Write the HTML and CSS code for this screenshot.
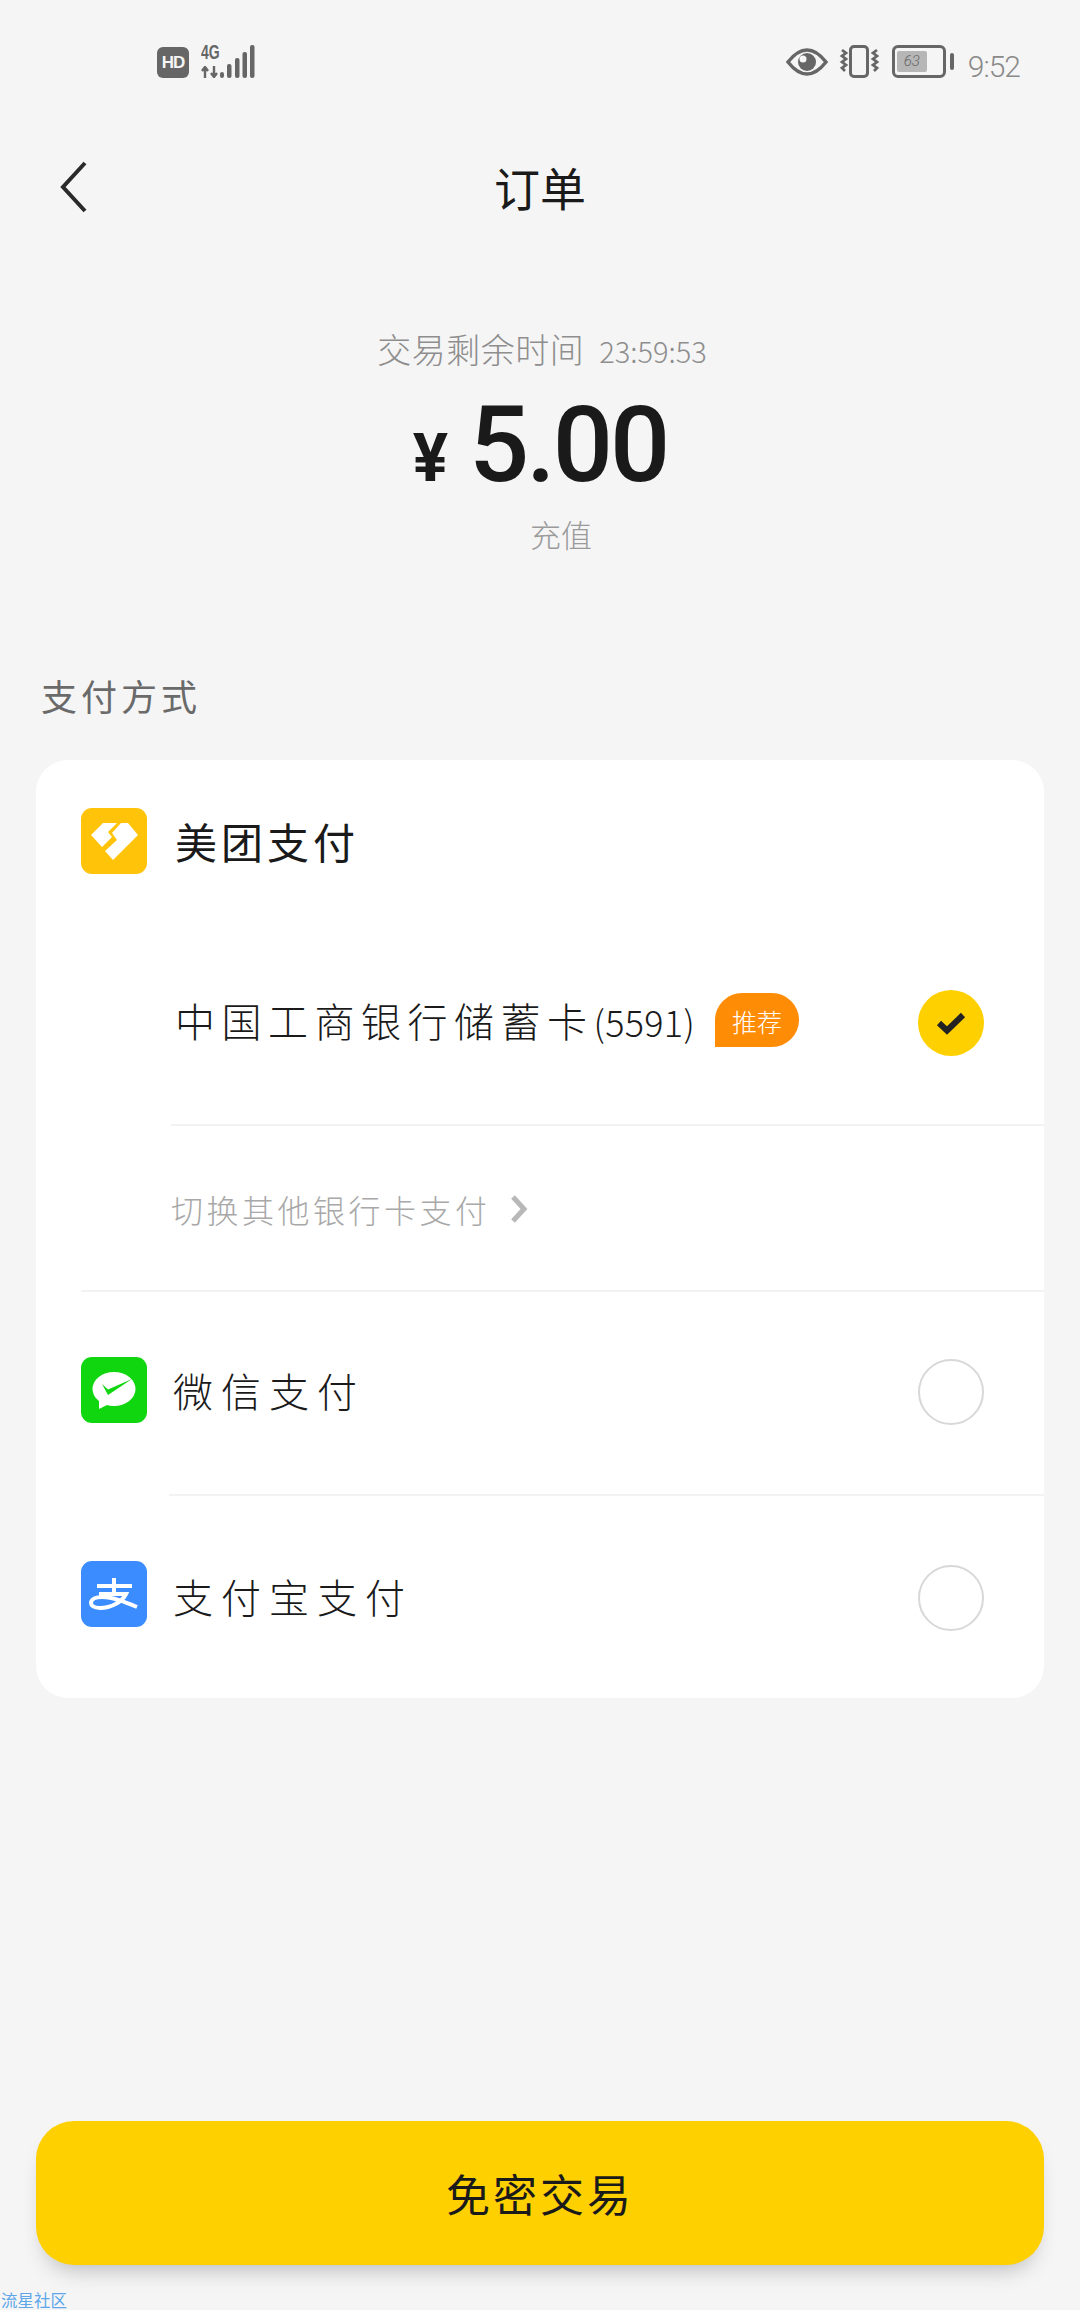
FILE: index.html
```html
<!DOCTYPE html>
<html lang="zh-CN">
<head>
    <meta charset="UTF-8">
    <meta name="viewport" content="width=device-width, initial-scale=1.0">
    <title>订单</title>
    <link rel="stylesheet" href="styles.css">
</head>
<body>
    <div class="page">
        <!-- Status bar -->
        <div class="status-bar">
            <div class="status-left">
                <span class="hd-badge">HD</span>
                <div class="net">
                    <span class="net-type">4G</span>
                    <svg width="18" height="12" viewBox="0 0 18 12">
                        <path d="M4 12V3M1 5l3-4 3 4" fill="none" stroke="#666" stroke-width="2.400"/>
                        <path d="M13 0v9M10 7l3 4 3-4" fill="none" stroke="#666" stroke-width="2.400"/>
                    </svg>
                </div>
                <svg class="bars" width="35" height="33" viewBox="0 0 35 33">
                    <rect x="0" y="27" width="4" height="6" rx="2" fill="#666"/>
                    <rect x="7" y="19" width="4.500" height="14" rx="2" fill="#666"/>
                    <rect x="15" y="13" width="4.500" height="20" rx="2" fill="#666"/>
                    <rect x="22.500" y="7" width="4.500" height="26" rx="2" fill="#666"/>
                    <rect x="30" y="0" width="4.500" height="33" rx="2" fill="#666"/>
                </svg>
            </div>
            <div class="status-right">
                <svg class="eye" width="42" height="28" viewBox="0 0 42 28">
                    <path d="M2 14C9 5 15 2 21 2s12 3 19 12c-7 9-13 12-19 12S9 23 2 14z" fill="none" stroke="#666" stroke-width="3.500"/>
                    <circle cx="21" cy="14" r="9" fill="#666"/>
                    <circle cx="17" cy="11" r="3.500" fill="#f5f5f5"/>
                </svg>
                <svg class="vibrate" width="40" height="33" viewBox="0 0 40 33">
                    <rect x="11.500" y="1.500" width="17" height="30" rx="3.500" fill="none" stroke="#666" stroke-width="3"/>
                    <path d="M3 5l4 3-4 3 4 3-4 3 4 3-4 3 3 3" fill="none" stroke="#666" stroke-width="2.800"/>
                    <path d="M38 5l-4 3 4 3-4 3 4 3-4 3 4 3-3 3" fill="none" stroke="#666" stroke-width="2.800"/>
                </svg>
                <div class="battery">
                    <div class="battery-body"><span class="battery-level">63</span></div>
                    <div class="battery-cap"></div>
                </div>
                <span class="clock">9:52</span>
            </div>
        </div>

        <!-- Title -->
        <div class="top-nav">
            <svg class="back" width="30" height="52" viewBox="0 0 30 52">
                <path d="M27 2L5 26l22 24" fill="none" stroke="#2a2a2a" stroke-width="4"/>
            </svg>
            <h1 class="page-title">订单</h1>
        </div>

        <!-- Amount -->
        <div class="order-info">
            <div class="countdown">交易剩余时间 <span class="countdown-time">23:59:53</span></div>
            <div class="amount"><span class="currency">¥</span><span class="price">5.00</span></div>
            <div class="order-name">充值</div>
        </div>

        <div class="section-title">支付方式</div>

        <!-- Payment methods -->
        <div class="pay-card">
            <div class="pay-head">
                <svg class="pay-icon" viewBox="0 0 66 66">
                    <rect width="66" height="66" rx="11" fill="#ffc30a"/>
                    <path d="M10 27L22 15h14l-9 9 4 5-10 10z" fill="#fff"/>
                    <path d="M40 15h7l10 12-25 25-8-9 12-11-5-7z" fill="#fff"/>
                </svg>
                <span class="pay-name-strong">美团支付</span>
            </div>
            <div class="bank-row">
                <span class="bank-name">中国工商银行储蓄卡<span class="bank-no">(5591)</span></span>
                <span class="tag">推荐</span>
                <span class="radio radio-on">
                    <svg width="30" height="24" viewBox="0 0 30 24"><path d="M3 12l8 7.500L27 4" fill="none" stroke="#222" stroke-width="6"/></svg>
                </span>
            </div>
            <div class="switch-row">
                <span>切换其他银行卡支付</span>
                <svg width="18" height="28" viewBox="0 0 18 28"><path d="M3 2l11 12L3 26" fill="none" stroke="#b8b8b8" stroke-width="5"/></svg>
            </div>
            <div class="pay-row pay-row-wechat">
                <svg class="pay-icon" viewBox="0 0 66 66">
                    <rect width="66" height="66" rx="11" fill="#10d610"/>
                    <ellipse cx="33" cy="32" rx="21.500" ry="17" fill="#fff"/>
                    <path d="M18 42l0 10 10-5z" fill="#fff"/>
                    <path d="M21 27l6 5.500L51 22 27 38z" fill="#10d610"/>
                </svg>
                <span class="pay-name">微信支付</span>
                <span class="radio"></span>
            </div>
            <div class="pay-row pay-row-alipay">
                <svg class="pay-icon" viewBox="0 0 66 66">
                    <rect width="66" height="66" rx="11" fill="#3b8cff"/>
                    <path d="M16 25h35M33 17v16M18 33h27C41 41 30 47 19 47 12 47 10 44 10 42c0-4 5-6 11-6 11 0 23 5 35 10" fill="none" stroke="#fff" stroke-width="4"/>
                </svg>
                <span class="pay-name">支付宝支付</span>
                <span class="radio"></span>
            </div>
        </div>

        <div class="spacer"></div>

        <button class="pay-btn">免密交易</button>
        <div class="watermark">流星社区</div>
    </div>
</body>
</html>
```
FILE: styles.css
```css
* {
    box-sizing: border-box;
}
html, body {
    margin: 0;
    padding: 0;
}
body {
    font-family: "Noto Sans CJK SC", "Noto Sans", sans-serif;
    background-color: #f5f5f5;
    color: #1a1a1a;
}
.page {
    width: 1080px;
    height: 2310px;
    display: flex;
    flex-direction: column;
    overflow: hidden;
}
.status-bar {
    height: 100px;
    padding: 45px 60px 0 157px;
    display: flex;
    justify-content: space-between;
    align-items: flex-start;
}
.status-left {
    height: 33px;
    display: flex;
    align-items: flex-end;
}
.hd-badge {
    width: 32px;
    height: 31px;
    margin-right: 12px;
    border-radius: 6px;
    background: #666;
    color: #f5f5f5;
    font-family: "Liberation Sans", sans-serif;
    font-weight: bold;
    font-size: 17px;
    letter-spacing: -1px;
    display: flex;
    align-items: center;
    justify-content: center;
}
.net {
    width: 19px;
    height: 33px;
    display: flex;
    flex-direction: column;
    justify-content: space-between;
}
.net-type {
    font-family: "Liberation Sans", sans-serif;
    font-size: 20px;
    line-height: 15px;
    font-weight: bold;
    color: #666;
    display: block;
    transform: scaleX(0.7);
    transform-origin: left center;
}
.status-right {
    height: 33px;
    display: flex;
    align-items: center;
}
.eye {
    margin-right: 11px;
}
.vibrate {
    margin-right: 13px;
}
.battery {
    display: flex;
    align-items: center;
    gap: 4px;
}
.battery-body {
    width: 54px;
    height: 33px;
    border: 3px solid #666;
    border-radius: 6px;
    padding: 3px 2px;
}
.battery-level {
    display: block;
    width: 30px;
    height: 21px;
    background: #b6b6b6;
    border-radius: 2px;
    color: #666;
    font-family: "Roboto", sans-serif;
    font-size: 15px;
    font-weight: 300;
    line-height: 21px;
    text-align: center;
    font-style: italic;
}
.battery-cap {
    width: 4px;
    height: 17px;
    background: #666;
    border-radius: 2px;
}
.clock {
    margin-left: 14px;
    padding-top: 9px;
    font-family: "Roboto", sans-serif;
    font-size: 30px;
    line-height: 33px;
    letter-spacing: -1px;
    color: #8a8a8a;
    font-weight: 300;
}
.top-nav {
    height: 180px;
    display: grid;
    grid-template-columns: 1fr auto 1fr;
    align-items: center;
}
.back {
    margin: -6px 0 0 58px;
}
.page-title {
    margin: -8px 0 0;
    font-size: 46px;
    font-weight: 400;
    line-height: 60px;
}
.order-info {
    margin-top: 47px;
    display: flex;
    flex-direction: column;
    align-items: center;
}
.countdown {
    padding-left: 4px;
    font-size: 34px;
    line-height: 44px;
    letter-spacing: 0.500px;
    color: #8e8e8e;
    font-weight: 300;
}
.countdown-time {
    margin-left: 7px;
    font-size: 29px;
    letter-spacing: 0;
}
.amount {
    margin-top: 25px;
    display: flex;
    align-items: baseline;
    justify-content: center;
    color: #1a1a1a;
    height: 96px;
}
.currency {
    font-family: "Roboto", sans-serif;
    font-weight: 700;
    font-size: 66px;
    margin-right: 21px;
    line-height: 96px;
}
.price {
    font-family: "Roboto", sans-serif;
    font-weight: 500;
    font-size: 106px;
    line-height: 96px;
    letter-spacing: -3px;
}
.order-name {
    margin-top: 19px;
    padding-left: 42px;
    font-size: 31px;
    line-height: 44px;
    color: #9a9a9a;
    font-weight: 300;
}
.section-title {
    margin: 112px 0 0 41px;
    font-size: 36px;
    line-height: 54px;
    letter-spacing: 4px;
    color: #6a6a6a;
}
.pay-card {
    margin: 38px 36px 0;
    height: 938px;
    background: #fff;
    border-radius: 32px;
    padding-left: 45px;
}
.pay-head {
    height: 161px;
    padding-top: 48px;
    display: flex;
    align-items: flex-start;
    gap: 28px;
}
.pay-icon {
    width: 66px;
    height: 66px;
    flex-shrink: 0;
}
.pay-name-strong {
    font-size: 42px;
    line-height: 66px;
    letter-spacing: 4px;
    color: #1a1a1a;
}
.bank-row {
    height: 205px;
    margin-left: 90px;
    padding-right: 60px;
    border-bottom: 2px solid #f2f2f2;
    display: flex;
    align-items: center;
    gap: 20px;
}
.bank-name {
    font-size: 40px;
    line-height: 50px;
    letter-spacing: 6.500px;
    font-weight: 300;
    margin: -4px 0 0 4px;
}
.bank-no {
    font-size: 36px;
    letter-spacing: 0.300px;
}
.tag {
    width: 84px;
    height: 54px;
    margin-top: -6px;
    background: #ff8c05;
    color: #fff;
    border-radius: 27px 27px 27px 0;
    font-size: 25px;
    line-height: 56px;
    text-align: center;
    font-weight: 300;
}
.radio {
    width: 66px;
    height: 66px;
    border-radius: 50%;
    border: 2px solid #d8d8d8;
    margin-left: auto;
    display: flex;
    align-items: center;
    justify-content: center;
    flex-shrink: 0;
}
.radio-on {
    background: #ffd000;
    border: 0;
}
.switch-row {
    height: 166px;
    margin-left: 90px;
    display: flex;
    align-items: center;
    gap: 19px;
    font-size: 32px;
    letter-spacing: 3.500px;
    color: #a8a8a8;
    font-weight: 300;
    position: relative;
}
.switch-row::after {
    content: "";
    position: absolute;
    left: -90px;
    right: 0;
    bottom: 0;
    border-bottom: 2px solid #f2f2f2;
}
.pay-row {
    height: 203px;
    padding-right: 60px;
    display: flex;
    align-items: center;
    gap: 26px;
}
.pay-row .pay-icon {
    margin-top: -4px;
}
.pay-row-wechat {
    height: 204px;
    padding-bottom: 4px;
    position: relative;
}
.pay-row-wechat::after {
    content: "";
    position: absolute;
    left: 88px;
    right: 0;
    bottom: 0;
    border-bottom: 2px solid #f2f2f2;
}
.pay-row-alipay .pay-icon {
    margin-top: -8px;
}
.pay-name {
    margin-top: -4px;
    font-size: 40px;
    line-height: 50px;
    letter-spacing: 8px;
    font-weight: 300;
}
.spacer {
    flex: 1;
}
.pay-btn {
    margin: 0 36px;
    height: 144px;
    flex-shrink: 0;
    border: none;
    border-radius: 38px;
    background-color: #ffd000;
    color: #1a1a1a;
    font-family: inherit;
    font-size: 44px;
    letter-spacing: 3px;
    box-shadow: 0 14px 22px -10px rgba(0, 0, 0, 0.25);
}
.watermark {
    height: 45px;
    padding: 26px 0 0 1px;
    font-size: 16.500px;
    line-height: 19px;
    color: #5da7ea;
}
```
